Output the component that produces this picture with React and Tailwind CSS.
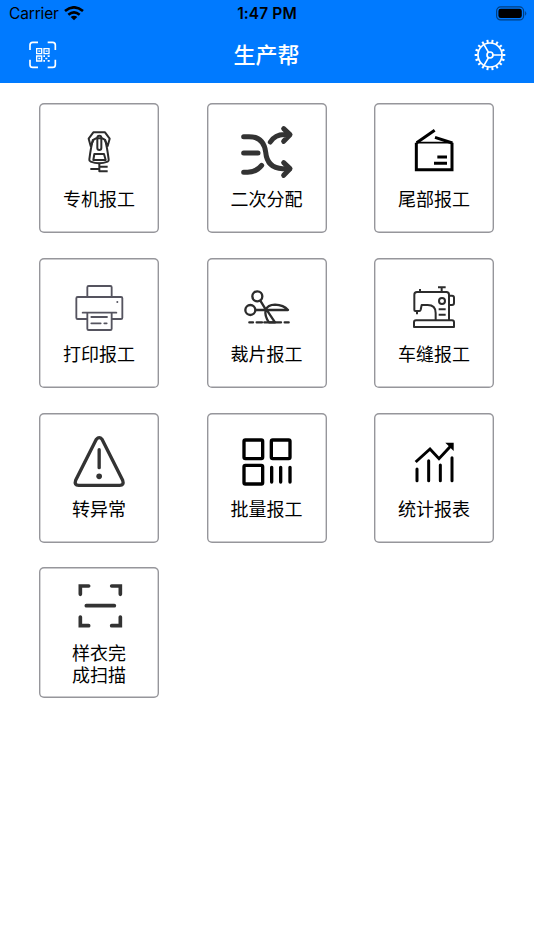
// src/App.jsx
import React from 'react';

const Icon = ({ box, color = '#2c2c2c', width = 7, children }) => (
  <svg
    className="w-[60px] h-[60px] shrink-0"
    viewBox={box}
    fill="none"
    stroke={color}
    strokeWidth={width}
    strokeLinejoin="round"
  >
    {children}
  </svg>
);

const ZipperIcon = () => (
  <Icon box="103 72 180 180" width={6}>
    <path d="M176 103h35l14 19-6 22-9-19-7-4h-19l-7 4-9 19-6-22z" />
    <path d="M175 124q-6 22-11 60-1 5 4 7 25 10 51 0 4-2 3-7-5-38-11-60" />
    <rect x="188" y="113" width="12" height="43" rx="6" />
    <path d="M179 168h29l5 18h-37z" />
    <path d="M194 194v26h25M167 213h27M194 206h25" />
  </Icon>
);

const ShuffleIcon = () => (
  <Icon box="105 72 180 180" color="#333333" width={15}>
    <g strokeLinecap="round">
      <path d="M125 116h16c31 0 46 17 50 46 3 33 19 49 51 50h20" />
      <path d="M125 165h43M125 223h12q26-1 42-21" />
      <path d="M205 132q17-26 50-22M245 92l19 18-19 20M245 194l19 18-19 20" />
    </g>
  </Icon>
);

const PackageIcon = () => (
  <Icon box="103 72 180 180" color="#000" width={9}>
    <path d="M140 134v81h107v-81" strokeLinejoin="miter" />
    <path d="M140 134h108" strokeWidth="5" />
    <path d="M141 134l54-37M196 118l52 17" />
    <path d="M203 177h29M193 196h39" />
  </Icon>
);

const PrinterIcon = () => (
  <Icon box="103 71 180 180" color="#55545f" width={5.5}>
    <path d="M158 131V102q0-4 4-4h65q4 0 4 4v29" />
    <path d="M158 197h-29q-4 0-4-4v-58q0-4 4-4h130q4 0 4 4v58q0 4-4 4h-28" />
    <path d="M144 178h101" strokeLinecap="round" />
    <path d="M158 178v48q0 4 4 4h65q4 0 4-4v-48" />
    <path d="M170 191h47M170 210h28M209 210h7" strokeLinecap="round" />
    <circle cx="248" cy="146" r="3" fill="#55545f" stroke="none" />
  </Icon>
);

const ScissorsIcon = () => (
  <Icon box="105 71 180 180" width={7}>
    <circle cx="166" cy="129" r="15" />
    <circle cx="145" cy="170" r="15" />
    <path d="M175 142l16 26M160 170h98q-13-15-39-16-22 0-28 16-4 18 10 37h18l-24-36" />
    <path d="M142 207h11M164 207h16M187 207h50M248 207h12" strokeLinecap="round" />
  </Icon>
);

const SewingIcon = () => (
  <Icon box="103 71 180 180" width={6}>
    <path d="M134 170v-46q0-8 8-8h88q8 0 8 8v76M134 170q0 3 3 3h12q3 0 4-4l3-14h18q24 0 24 24v21" />
    <path d="M151 107v9M142 173v10M205 102h23M216 102v14" />
    <path d="M238 127h9q6 0 6 6v16q0 6-6 6h-9" />
    <circle cx="217" cy="143" r="9" />
    <path d="M207 168h21M207 184h21" />
    <path d="M133 221v-14q0-6 6-6h108q6 0 6 6v14z" />
  </Icon>
);

const WarningIcon = () => (
  <Icon box="103 71 180 180" color="#333333" width={10}>
    <path d="M185 93L123 216q-5 15 9 15h123q14 0 9-15L202 93q-8-10-17 0z" />
    <path d="M193.500 124v54" strokeLinecap="round" />
    <circle cx="193.500" cy="204" r="8.500" fill="#333333" stroke="none" />
  </Icon>
);

const BatchIcon = () => (
  <Icon box="105 71 180 180" color="#000" width={10}>
    <rect x="126" y="95" width="56" height="56" rx="4" />
    <rect x="208" y="95" width="56" height="56" rx="4" />
    <rect x="126" y="171" width="56" height="56" rx="4" />
    <path d="M209 177v44M236 177v44M264 177v44" strokeLinecap="round" />
  </Icon>
);

const ChartIcon = () => (
  <Icon box="105 71 180 180" color="#000" width={9}>
    <g strokeLinecap="round">
      <path d="M144 182v35M179 157v60M214 170v47M249 148v69" />
    </g>
    <path d="M140 161l43-39 27 29 36-39" strokeLinejoin="miter" />
    <path d="M229 103h25v25z" fill="#000" stroke="none" />
  </Icon>
);

const ScanIcon = () => (
  <Icon box="103 38 180 180" color="#333333" width={11}>
    <g strokeLinecap="round">
      <path d="M137 93V68h25M231 68h26v25M137 161v26h25M231 187h26v-26" strokeLinejoin="miter" />
      <path d="M155 127h84" />
    </g>
  </Icon>
);

const items = [
  { label: '专机报工', icon: ZipperIcon },
  { label: '二次分配', icon: ShuffleIcon },
  { label: '尾部报工', icon: PackageIcon },
  { label: '打印报工', icon: PrinterIcon },
  { label: '裁片报工', icon: ScissorsIcon },
  { label: '车缝报工', icon: SewingIcon },
  { label: '转异常', icon: WarningIcon },
  { label: '批量报工', icon: BatchIcon },
  { label: '统计报表', icon: ChartIcon },
  { label: '样衣完成扫描', icon: ScanIcon },
];

const StatusBar = () => (
  <div className="grid grid-cols-3 items-center h-[27px] pl-[9px] pr-[7px] text-black">
    <div className="flex items-center gap-[5px]">
      <span className="text-[15.5px] tracking-[-0.15px]">Carrier</span>
      <svg className="w-5 h-[15px]" viewBox="0 0 60 45" fill="none" stroke="#000" strokeWidth="8">
        <path d="M3 15Q30-7 57 15M13 26q17-14 34 0" />
        <path d="M20 33q10-8 20 0L30 43z" fill="#000" stroke="none" />
      </svg>
    </div>
    <span className="-ml-0.5 pt-px text-center text-[15.5px] font-semibold tracking-[0.1px]">1:47 PM</span>
    <svg className="w-[31px] h-[15px] justify-self-end" viewBox="0 0 31 15">
      <rect x="0.6" y="0.9" width="27" height="13" rx="4" fill="none" stroke="#003f80" strokeWidth="1.2" />
      <rect x="2.400" y="2.700" width="23.400" height="9.400" rx="2.300" fill="#000" />
      <path d="M29.200 5q2.200 2.400 0 4.800z" fill="#003f80" />
    </svg>
  </div>
);

const QrIcon = () => (
  <svg className="w-7 h-7" viewBox="87 123 84 84" fill="none" stroke="#fff" strokeWidth="4">
    <path
      d="M90 150v-15q0-8 8-8h16M143 127h15q8 0 8 8v15M90 179v15q0 8 8 8h16M143 202h15q8 0 8-8v-15"
      strokeWidth="5"
    />
    <path d="M110 146h15v15h-15zM132 146h15v15h-15zM110 168h15v15h-15z" />
    <path d="M115 153.500h6M137 153.500h6M115 175.500h6" />
    <path
      d="M130 166h5v5h-5zM143 166h6v5h-6zM136 173h6v5h-6zM130 180h5v5h-5zM143 180h6v5h-6z"
      fill="#fff"
      stroke="none"
    />
  </svg>
);

const teeth = Array.from({ length: 18 }, (_, i) => i * 20);

const GearIcon = () => (
  <svg className="w-8 h-8" viewBox="-48 -48 96 96" fill="none" stroke="#fff" strokeWidth="5">
    <circle r="36" />
    <circle r="9" />
    <path d="M9 0h27M-4.500 -8l-13.500 -23M-4.500 8l-13.500 23" />
    {teeth.map((angle) => (
      <path key={angle} d="M37 0h9" transform={`rotate(${angle})`} strokeWidth="6" />
    ))}
  </svg>
);

const Header = () => (
  <header className="h-[83px] bg-[#007aff]">
    <StatusBar />
    <div className="flex items-center justify-between h-14 pl-[29px] pr-7">
      <button aria-label="scan">
        <QrIcon />
      </button>
      <h1 className="pl-0.5 text-[22px] leading-none font-medium text-white">生产帮</h1>
      <button aria-label="settings">
        <GearIcon />
      </button>
    </div>
  </header>
);

const App = () => {
  return (
    <div className="w-full h-screen bg-white overflow-hidden font-[Inter,'Noto_Sans_CJK_SC',sans-serif]">
      <Header />
      <main className="grid grid-cols-[repeat(3,120px)] justify-center gap-x-[47.5px] gap-y-[24.5px] pt-5 pr-px">
        {items.map(({ label, icon: ItemIcon }) => (
          <button
            key={label}
            className="flex flex-col items-center justify-center h-[130.3px] pb-[3px] rounded-[5px] shadow-[inset_0_0_0_1.4px_#96969b] text-black"
          >
            <ItemIcon />
            <span className="mt-[7px] w-[76px] text-center text-[18px] leading-[22px]">
              {label.length > 4 ? (
                <>
                  {label.slice(0, 3)}
                  <br />
                  {label.slice(3)}
                </>
              ) : (
                label
              )}
            </span>
          </button>
        ))}
      </main>
    </div>
  );
};

export default App;
